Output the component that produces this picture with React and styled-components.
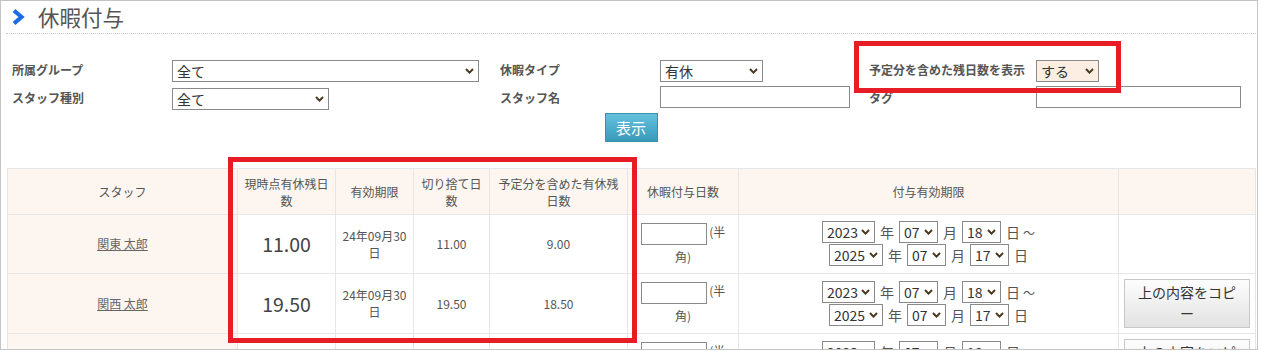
import { createGlobalStyle, styled } from "styled-components";

const GlobalStyle = createGlobalStyle`
	body {
		margin: 0;
		background: #fff;
		font-family: "Noto Sans CJK JP", "Noto Sans", sans-serif;
		color: #555;
	}
`;

const Frame = styled.div`
	position: relative;
	box-sizing: border-box;
	width: 1258px;
	height: 350px;
	border: 1px solid #c4c4c4;
	padding: 0 1px 0 5px;
	overflow: hidden;
`;

const Header = styled.div`
	display: flex;
	align-items: center;
	height: 32px;
	border-bottom: 1px dotted #c8c8c8;
`;

const Chevron = styled.svg`
	margin-left: 5px;
	flex-shrink: 0;
`;

const Title = styled.h1`
	margin: 0 0 0 13px;
	font-size: 21.5px;
	font-weight: normal;
	color: #555;
	line-height: 1;
`;

const FormGrid = styled.div`
	display: grid;
	grid-template-columns: 160px 328px 160px 209px 167px 1fr;
	grid-auto-rows: 22px;
	row-gap: 6px;
	align-items: center;
	margin-top: 24px;
	padding-left: 6px;
`;

const Label = styled.label`
	font-size: 12px;
	font-weight: bold;
	color: #555;
`;

const SelectWrap = styled.span`
	position: relative;
	display: inline-block;
	vertical-align: middle;
	line-height: 0;
`;

const Select = styled.select`
	display: block;
	box-sizing: border-box;
	width: ${(p) => p.$w}px;
	height: 22px;
	padding: 0 14px 0 4px;
	appearance: none;
	border: 1px solid #8a8a8a;
	border-radius: 0;
	background: ${(p) => (p.$peach ? "#fdeee4" : "#fff")};
	color: #333;
	font-family: inherit;
	font-size: 14px;
	line-height: 20px;
`;

const Arrow = styled.svg`
	position: absolute;
	right: 5px;
	top: 8px;
	pointer-events: none;
`;

const TextInput = styled.input`
	box-sizing: border-box;
	width: ${(p) => p.$w}px;
	height: 22px;
	border: 1px solid #8a8a8a;
	border-radius: 0;
	padding: 0 4px;
	font-family: inherit;
	font-size: 14px;
	vertical-align: middle;
	display: ${(p) => (p.$block ? "block" : "inline-block")};
`;

const ButtonRow = styled.div`
	display: flex;
	justify-content: center;
	margin-top: 5px;
`;

const SearchButton = styled.button`
	box-sizing: border-box;
	width: 53px;
	height: 29px;
	border: 1px solid #3790ac;
	border-radius: 0;
	background: linear-gradient(#62c2de, #3a9aba);
	color: #fff;
	font-family: inherit;
	font-size: 15px;
	padding: 0;
`;

const Table = styled.table`
	width: 1248px;
	margin: 26px 0 0 1px;
	border-collapse: collapse;
	table-layout: fixed;
	font-size: 12px;
	color: #555;

	th,
	td {
		border: 1px solid #e6e6e6;
		padding: 5px;
		text-align: center;
		vertical-align: middle;
	}
`;

const Th = styled.th`
	background: #fdf5ef;
	font-weight: normal;
	line-height: 17px;
	height: 35px;
`;

const StaffCell = styled.td`
	background: #fdf5ef;
`;

const NameLink = styled.a`
	color: #666;
	text-decoration: underline;
`;

const BigNum = styled.td`
	font-size: 19.5px;
	color: #444;
`;

const DateText = styled.td`
	line-height: 17px;
`;

const HalfCell = styled.td`
	&& {
		padding: 5px 8px;
	}
	line-height: 23px;
`;

const DateCell = styled.td`
	font-size: 14px;
	color: #555;
`;

const DateLine = styled.div`
	display: flex;
	justify-content: center;
	align-items: center;
	gap: 5px;
	height: 23px;
`;

const Tilde = styled.span`
	margin-left: 3px;
	font-size: 12px;
`;

const CopyButton = styled.button`
	box-sizing: border-box;
	width: 126px;
	height: 49px;
	padding: 2px 8px;
	border: 1px solid #c8c8c8;
	border-radius: 0;
	background: linear-gradient(#fdfdfd, #e2e2e2);
	color: #333;
	font-family: inherit;
	font-size: 14px;
	line-height: 21px;
	display: block;
`;

const RedBox = styled.div`
	position: absolute;
	box-sizing: border-box;
	left: ${(p) => p.$x}px;
	top: ${(p) => p.$y}px;
	width: ${(p) => p.$w}px;
	height: ${(p) => p.$h}px;
	border: 5px solid #e81c24;
	pointer-events: none;
`;

const rows = [
	{ name: "関東 太郎", now: "11.00", cut: "11.00", planned: "9.00", copy: false },
	{ name: "関西 太郎", now: "19.50", cut: "19.50", planned: "18.50", copy: true },
	{ name: "東北 太郎", now: "5.00", cut: "5.00", planned: "5.00", copy: true },
];

function Dropdown({ w, value, peach }) {
	return (
		<SelectWrap>
			<Select $w={w} $peach={peach} defaultValue={value}>
				<option>{value}</option>
			</Select>
			<Arrow width="9" height="6" viewBox="0 0 9 6">
				<polyline
					points="1,1 4.5,4.6 8,1"
					fill="none"
					stroke="#4a3820"
					strokeWidth="2"
				/>
			</Arrow>
		</SelectWrap>
	);
}

function App() {
	return (
		<>
			<GlobalStyle />
			<Frame>
				<Header>
					<Chevron width="14" height="18" viewBox="0 0 14 18">
						<polyline
							points="3,2.5 10.5,9 3,15.5"
							fill="none"
							stroke="#1c6ce6"
							strokeWidth="4.2"
						/>
					</Chevron>
					<Title>休暇付与</Title>
				</Header>

				<FormGrid>
					<Label>所属グループ</Label>
					<div>
						<Dropdown w={307} value="全て" />
					</div>
					<Label>休暇タイプ</Label>
					<div>
						<Dropdown w={103} value="有休" />
					</div>
					<Label>予定分を含めた残日数を表示</Label>
					<div>
						<Dropdown w={63} value="する" peach />
					</div>

					<Label>スタッフ種別</Label>
					<div>
						<Dropdown w={157} value="全て" />
					</div>
					<Label>スタッフ名</Label>
					<div>
						<TextInput $w={190} $block />
					</div>
					<Label>タグ</Label>
					<div>
						<TextInput $w={205} $block />
					</div>
				</FormGrid>

				<ButtonRow>
					<SearchButton>表示</SearchButton>
				</ButtonRow>

				<Table>
					<colgroup>
						<col style={{ width: 230 }} />
						<col style={{ width: 98 }} />
						<col style={{ width: 78 }} />
						<col style={{ width: 76 }} />
						<col style={{ width: 138 }} />
						<col style={{ width: 111 }} />
						<col style={{ width: 380 }} />
						<col style={{ width: 137 }} />
					</colgroup>
					<thead>
						<tr>
							<Th>スタッフ</Th>
							<Th>現時点有休残日数</Th>
							<Th>有効期限</Th>
							<Th>切り捨て日数</Th>
							<Th>予定分を含めた有休残日数</Th>
							<Th>休暇付与日数</Th>
							<Th>付与有効期限</Th>
							<Th></Th>
						</tr>
					</thead>
					<tbody>
						{rows.map((r) => (
							<tr key={r.name}>
								<StaffCell>
									<NameLink href="#">{r.name}</NameLink>
								</StaffCell>
								<BigNum>{r.now}</BigNum>
								<DateText>24年09月30日</DateText>
								<td>{r.cut}</td>
								<td>{r.planned}</td>
								<HalfCell>
									<TextInput $w={66} /> (半角)
								</HalfCell>
								<DateCell>
									<DateLine>
										<Dropdown w={53} value="2023" />
										<span>年</span>
										<Dropdown w={39} value="07" />
										<span>月</span>
										<Dropdown w={39} value="18" />
										<span>
											日<Tilde>～</Tilde>
										</span>
									</DateLine>
									<DateLine>
										<Dropdown w={54} value="2025" />
										<span>年</span>
										<Dropdown w={39} value="07" />
										<span>月</span>
										<Dropdown w={39} value="17" />
										<span>日</span>
									</DateLine>
								</DateCell>
								<td>{r.copy && <CopyButton>上の内容をコピー</CopyButton>}</td>
							</tr>
						))}
					</tbody>
				</Table>

				<RedBox $x={853} $y={40} $w={267} $h={52} />
				<RedBox $x={227} $y={156} $w={409} $h={186} />
			</Frame>
		</>
	);
}

export default App;
